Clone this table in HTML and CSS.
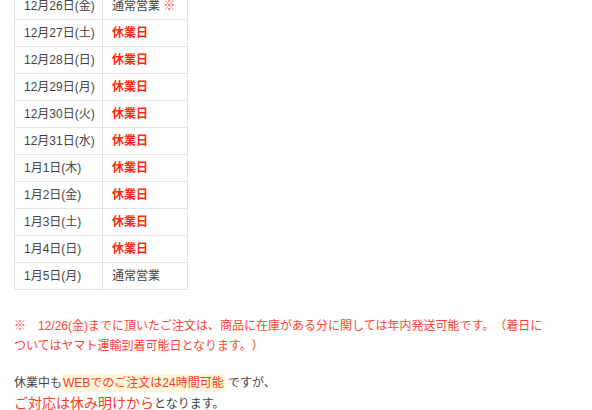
FILE: index.html
```html
<!DOCTYPE html>
<html lang="ja">
<head>
    <meta charset="UTF-8">
    <meta name="viewport" content="width=device-width, initial-scale=1.0">
    <title>年末年始の営業日のお知らせ</title>
    <link rel="stylesheet" href="styles.css">
</head>
<body>

    <div class="content">
        <table class="holiday-table">
            <tr><td>12月26日(金)</td><td>通常営業 <span class="mark">※</span></td></tr>
            <tr><td>12月27日(土)</td><td class="closed">休業日</td></tr>
            <tr><td>12月28日(日)</td><td class="closed">休業日</td></tr>
            <tr><td>12月29日(月)</td><td class="closed">休業日</td></tr>
            <tr><td>12月30日(火)</td><td class="closed">休業日</td></tr>
            <tr><td>12月31日(水)</td><td class="closed">休業日</td></tr>
            <tr><td>1月1日(木)</td><td class="closed">休業日</td></tr>
            <tr><td>1月2日(金)</td><td class="closed">休業日</td></tr>
            <tr><td>1月3日(土)</td><td class="closed">休業日</td></tr>
            <tr><td>1月4日(日)</td><td class="closed">休業日</td></tr>
            <tr><td>1月5日(月)</td><td>通常営業</td></tr>
        </table>

        <p class="note">※　12/26(金)までに頂いたご注文は、商品に在庫がある分に関しては年内発送可能です。（着日についてはヤマト運輸到着可能日となります。）</p>

        <p class="web-info">
            休業中も<span class="highlight">WEBでのご注文は24時間可能</span> ですが、<br>
            <span class="big-red">ご対応は休み明けから</span>となります。
        </p>
    </div>

</body>
</html>
```

FILE: styles.css
```css
/* General Styles */
body {
    font-family: "Liberation Sans", "Noto Sans CJK JP", sans-serif;
    margin: 0;
    padding: 0;
    background-color: #fff;
    color: #444;
    text-spacing-trim: space-all;
}

.content {
    padding: 0 14px;
    margin-top: -8px;
}

.holiday-table {
    border-collapse: collapse;
    table-layout: fixed;
    width: 174px;
    font-size: 12px;
}

.holiday-table td {
    border: 1px solid #e3e3e3;
    padding: 4px 0 4px 9px;
    line-height: 18px;
    white-space: nowrap;
    overflow: hidden;
}

.holiday-table td:first-child {
    width: 78px;
}

.holiday-table .closed {
    color: #ff2a14;
    font-weight: bold;
}

.mark {
    color: #ff3b2a;
}

.note {
    color: #ff4433;
    font-size: 12px;
    line-height: 20px;
    margin: 26px 0 0 0;
    width: 530px;
}

.web-info {
    font-size: 12px;
    line-height: 20px;
    margin: 17px 0 0 0;
}

.highlight {
    color: #ff3a28;
    background-color: #fff6d9;
    padding: 2px 1px;
}

.big-red {
    color: #ff3a28;
    font-size: 14px;
}
```
